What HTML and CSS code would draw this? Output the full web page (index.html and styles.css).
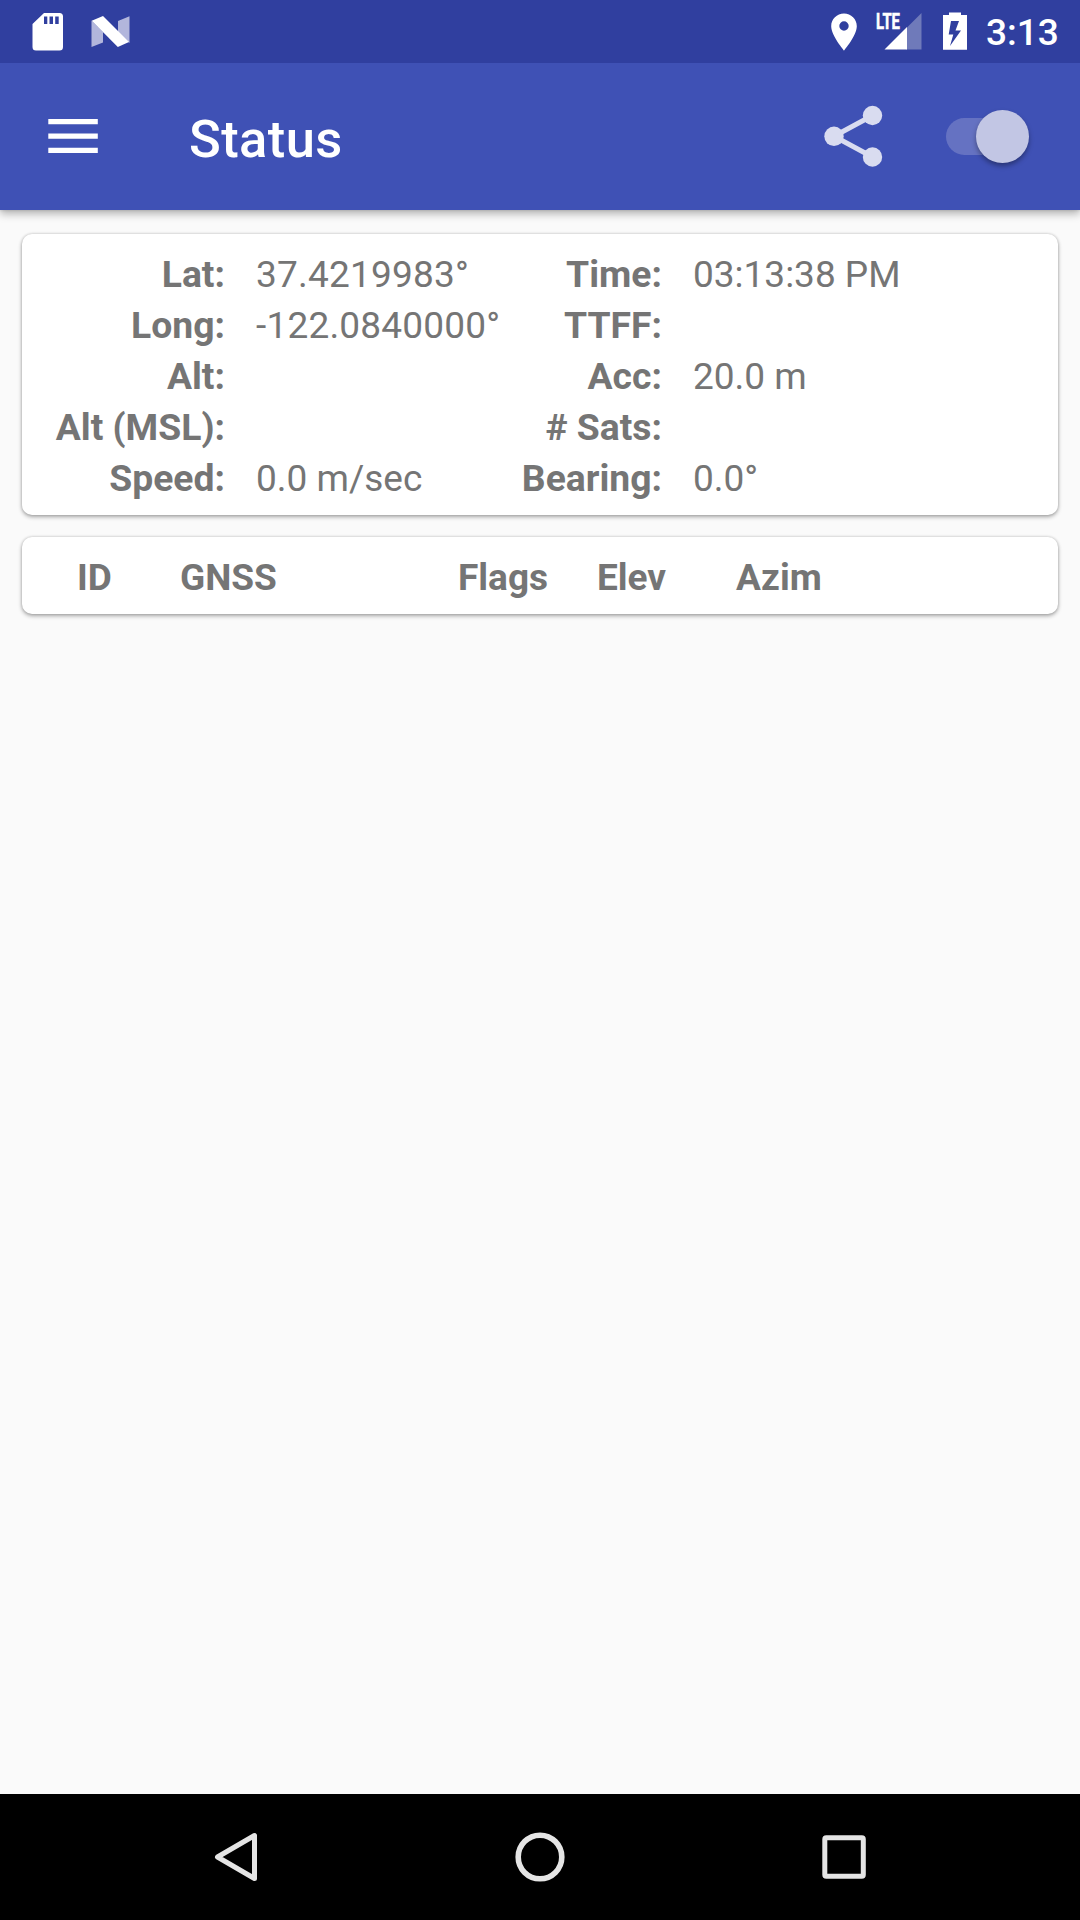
FILE: index.html
```html
<!DOCTYPE html>
<html lang="en">
<head>
<meta charset="utf-8">
<title>Status</title>
<link rel="stylesheet" href="styles.css">
</head>
<body>
<header class="status-bar">
  <svg class="icon-sd" width="32" height="40" viewBox="0 0 32 40"><path fill="#fff" fill-rule="evenodd" d="M12 1H27.500Q31 1 31 4.500V35Q31 38.500 27.500 38.500H4Q.5 38.500 .5 35V12ZM12 4.500V12H15.300V4.500ZM17.500 4.500V12H21V4.500ZM23.200 4.500V12H26.700V4.500Z"/></svg>
  <svg class="icon-n" width="39" height="32" viewBox="0 0 39 32"><path fill="#b2b6dc" d="M.5 4.500 12 16V26.500L.5 31ZM27 5 38.500.3V27L27 16Z"/><path fill="#fff" d="M.7 4.700 12 0 38 26 26.800 31Z"/></svg>
  <div class="status-right">
    <svg class="icon-pin" width="26" height="38" viewBox="0 0 26 38"><path fill="#fff" fill-rule="evenodd" d="M13 .5C5.900.5.200 6.100.200 13.200.200 22.500 13 37.500 13 37.500S25.800 22.500 25.800 13.200C25.800 6.100 20.100.5 13 .5ZM13 8.300A4.700 4.700 0 1 1 13 17.700A4.700 4.700 0 1 1 13 8.300Z"/></svg>
    <svg class="icon-signal" width="47" height="38" viewBox="0 0 47 38"><path fill="#6f7aba" d="M45.500 0V36.500H30V15.500Z"/><path fill="#fff" d="M8.500 36.500 31 14V36.500Z"/><text class="lte" x="0" y="16.300" textLength="24" lengthAdjust="spacingAndGlyphs">LTE</text></svg>
    <svg class="icon-battery" width="24" height="38" viewBox="0 0 24 38"><path fill="#fff" fill-rule="evenodd" d="M6 .5H18V3H24V37.800H0V3H6ZM8 9 5.700 22.500H10.300L7 34 18 18.500H12.500L16 9Z"/></svg>
    <span class="clock">3:13</span>
  </div>
</header>
<nav class="toolbar">
  <svg class="icon-menu" width="50" height="36" viewBox="0 0 50 36"><path fill="#fff" d="M.3 1H49.800V6.200H.3ZM.3 15.500H49.800V20.700H.3ZM.3 29.800H49.800V35H.3Z"/></svg>
  <h1 class="title">Status</h1>
  <svg class="icon-share" width="60" height="64" viewBox="0 0 60 64"><path d="M48.500 11.500 10 32.300 48.500 53" fill="none" stroke="#d9dcf0" stroke-width="5"/><g fill="#d9dcf0"><circle cx="48.500" cy="11.500" r="9.700"/><circle cx="10" cy="32.300" r="9.700"/><circle cx="48.500" cy="53" r="9.700"/></g></svg>
  <div class="switch"><div class="thumb"></div></div>
</nav>
<main class="content">
  <section class="card fix">
    <b>Lat:</b><span class="coordinate">37.4219983°</span><b>Time:</b><span>03:13:38 PM</span>
    <b>Long:</b><span class="coordinate">-122.0840000°</span><b>TTFF:</b><span></span>
    <b>Alt:</b><span></span><b>Acc:</b><span>20.0 m</span>
    <b>Alt (MSL):</b><span></span><b># Sats:</b><span></span>
    <b>Speed:</b><span>0.0 m/sec</span><b>Bearing:</b><span>0.0°</span>
  </section>
  <section class="card satellites">
    <b>ID</b><b>GNSS</b><b>Flags</b><b>Elev</b><b>Azim</b>
  </section>
</main>
<footer class="nav-bar">
  <svg width="50" height="56" viewBox="0 0 50 56"><path d="M43.500 6.500V49.500L6.500 28Z" fill="none" stroke="#e5e5e5" stroke-width="5" stroke-linejoin="round"/></svg>
  <svg width="50" height="56" viewBox="0 0 50 56"><circle cx="25" cy="28" r="21.800" fill="none" stroke="#e5e5e5" stroke-width="5.600"/></svg>
  <svg width="50" height="56" viewBox="0 0 50 56"><rect x="5.800" y="8.700" width="38.500" height="38.500" rx="1.500" fill="none" stroke="#e5e5e5" stroke-width="5"/></svg>
</footer>
</body>
</html>
```
FILE: styles.css
```css
* { box-sizing: border-box; }
body {
  margin: 0;
  height: 1920px;
  display: flex;
  flex-direction: column;
  overflow: hidden;
  background: #fafafa;
  color: #757575;
  font-family: Roboto, sans-serif;
}
svg { display: block; flex: none; overflow: visible; }
.status-bar {
  height: 63px;
  display: flex;
  align-items: flex-start;
  padding: 12px 22px 0 32px;
  background: #303f9f;
  color: #fff;
}
.icon-n { margin: 4px 0 0 27px; }
.status-right { margin-left: auto; display: flex; align-items: flex-start; }
.icon-pin { margin: 1px 19px 0 0; }
.icon-signal { margin: 1px 20px 0 0; }
.lte { font-size: 22.5px; font-weight: 700; fill: #fff; stroke: #fff; stroke-width: .6px; }
.clock {
  width: 72px;
  margin-left: 19px;
  font-size: 37px;
  font-weight: 500;
  line-height: 42px;
}
.toolbar {
  height: 147px;
  display: flex;
  align-items: center;
  padding: 0 51px 2px 48px;
  background: #3f51b5;
  box-shadow: 0 4px 8px rgba(0, 0, 0, .28), 0 0 3px rgba(0, 0, 0, .15);
  clip-path: inset(0 0 -20px 0);
}
.title {
  margin: 6px auto 0 91px;
  color: #fff;
  font-size: 52.5px;
  font-weight: 500;
  line-height: 62px;
  letter-spacing: .4px;
}
.icon-share { margin-right: 62px; }
.switch {
  display: flex;
  align-items: center;
  justify-content: flex-end;
  width: 83px;
  height: 37px;
  margin-top: 2px;
  border-radius: 19px;
  background: linear-gradient(90deg, #6572c2 60px, transparent 60px);
}
.thumb {
  flex: none;
  width: 53px;
  height: 53px;
  border-radius: 50%;
  background: #c2c6e4;
  box-shadow: 0 3px 5px rgba(0, 0, 0, .35);
}
.content {
  flex: 1;
  display: flex;
  flex-direction: column;
  gap: 22px;
  padding: 24px 22px;
}
.card {
  display: grid;
  border-radius: 10px;
  background: #fff;
  box-shadow: 0 2px 4px rgba(0, 0, 0, .32), 0 0 3px rgba(0, 0, 0, .18);
  font-size: 37px;
  line-height: 51px;
  white-space: nowrap;
}
.fix {
  height: 281px;
  grid-template-columns: 203px 234px 203px 1fr;
  grid-template-rows: repeat(5, 51px);
  padding: 15px 0 0;
}
.fix b { text-align: right; font-size: 37.3px; }
.fix span { padding-left: 31px; }
.fix .coordinate { letter-spacing: .2px; }
.satellites {
  height: 77px;
  grid-template-columns: 103px 278px 139px 139px 1fr;
  padding: 15px 0 0 55px;
}
.nav-bar {
  height: 126px;
  display: flex;
  align-items: center;
  justify-content: center;
  gap: 254px;
  background: #000;
}
```
